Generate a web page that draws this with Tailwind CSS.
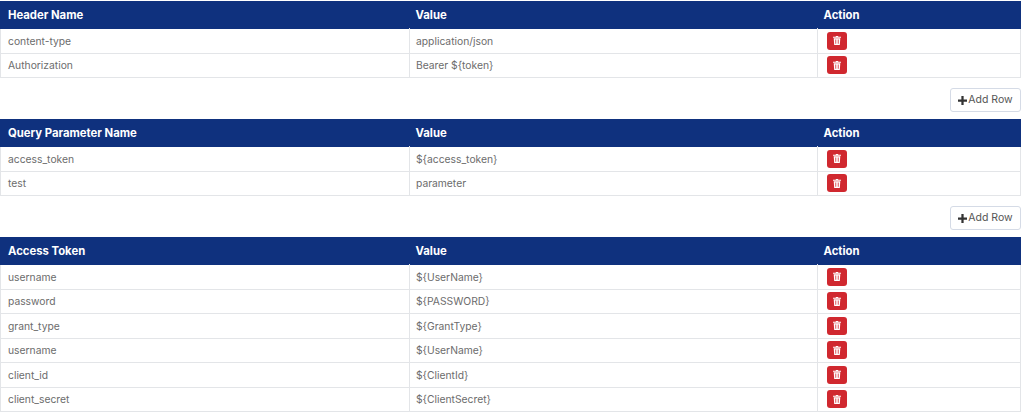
<!DOCTYPE html>
<html><head>
<meta charset="utf-8">
<title>Request settings</title>
<script src="https://cdn.jsdelivr.net/npm/@tailwindcss/browser@4"></script>
</head>
<body class="bg-white overflow-hidden h-[412px] font-['Inter',sans-serif] text-[10.3px] text-[#6c6c6c]">
  <div class="w-[1021px] pt-px">

    <!-- headers -->
    <table class="w-full table-fixed border-collapse">
      <thead>
        <tr class="h-[27px] bg-[#0f317e] border border-[#0f317e] text-white text-[11.3px] font-bold text-left">
          <th class="w-[409px] pl-[7px] pt-px font-bold">Header Name</th>
          <th class="w-[408px] pl-[6px] pt-px font-bold">Value</th>
          <th class="pl-[6px] pt-px font-bold">Action</th>
        </tr>
      </thead>
      <tbody>
        <tr class="h-[24.5px] border border-[#e3e5e8]">
          <td class="pl-[7px] pt-px">content-type</td>
          <td class="pl-[6px] pt-px border-l border-[#e3e5e8]">application/json</td>
          <td class="pl-[9px] border-l border-[#e3e5e8]">
            <button class="flex items-center justify-center w-[20px] h-[18px] rounded-[3px] bg-[#d0282f]"><svg width="8" height="9" viewBox="0 0 8 9"><path fill="#fff" d="M3 0h2l.4.8H8v1H0v-1h2.6zM.7 2.3h6.6L6.8 9H1.2zM2.4 3.4v4.4h.8V3.4zm2.4 0v4.4h.8V3.4z"/></svg></button>
          </td>
        </tr>
        <tr class="h-[24.5px] border border-[#e3e5e8]">
          <td class="pl-[7px] pt-px">Authorization</td>
          <td class="pl-[6px] pt-px border-l border-[#e3e5e8]">Bearer ${token}</td>
          <td class="pl-[9px] border-l border-[#e3e5e8]">
            <button class="flex items-center justify-center w-[20px] h-[18px] rounded-[3px] bg-[#d0282f]"><svg width="8" height="9" viewBox="0 0 8 9"><path fill="#fff" d="M3 0h2l.4.8H8v1H0v-1h2.6zM.7 2.3h6.6L6.8 9H1.2zM2.4 3.4v4.4h.8V3.4zm2.4 0v4.4h.8V3.4z"/></svg></button>
          </td>
        </tr>
      </tbody>
    </table>
    <div class="flex justify-end pt-[10px] pb-[7px]">
      <button class="flex items-center justify-center gap-px w-[71px] h-[24px] rounded-[3px] border border-[#d5dbe6] text-[10.5px] text-[#555]"><svg width="9" height="9" viewBox="0 0 8 8"><path fill="#333" d="M3 0h2v3h3v2H5v3H3V5H0V3h3z"/></svg>Add Row</button>
    </div>

    <!-- query parameters -->
    <table class="w-full table-fixed border-collapse">
      <thead>
        <tr class="h-[27px] bg-[#0f317e] border border-[#0f317e] text-white text-[11.3px] font-bold text-left">
          <th class="w-[409px] pl-[7px] pt-px font-bold">Query Parameter Name</th>
          <th class="w-[408px] pl-[6px] pt-px font-bold">Value</th>
          <th class="pl-[6px] pt-px font-bold">Action</th>
        </tr>
      </thead>
      <tbody>
        <tr class="h-[24.5px] border border-[#e3e5e8]">
          <td class="pl-[7px] pt-px">access_token</td>
          <td class="pl-[6px] pt-px border-l border-[#e3e5e8]">${access_token}</td>
          <td class="pl-[9px] border-l border-[#e3e5e8]">
            <button class="flex items-center justify-center w-[20px] h-[18px] rounded-[3px] bg-[#d0282f]"><svg width="8" height="9" viewBox="0 0 8 9"><path fill="#fff" d="M3 0h2l.4.8H8v1H0v-1h2.6zM.7 2.3h6.6L6.8 9H1.2zM2.4 3.4v4.4h.8V3.4zm2.4 0v4.4h.8V3.4z"/></svg></button>
          </td>
        </tr>
        <tr class="h-[24.5px] border border-[#e3e5e8]">
          <td class="pl-[7px] pt-px">test</td>
          <td class="pl-[6px] pt-px border-l border-[#e3e5e8]">parameter</td>
          <td class="pl-[9px] border-l border-[#e3e5e8]">
            <button class="flex items-center justify-center w-[20px] h-[18px] rounded-[3px] bg-[#d0282f]"><svg width="8" height="9" viewBox="0 0 8 9"><path fill="#fff" d="M3 0h2l.4.8H8v1H0v-1h2.6zM.7 2.3h6.6L6.8 9H1.2zM2.4 3.4v4.4h.8V3.4zm2.4 0v4.4h.8V3.4z"/></svg></button>
          </td>
        </tr>
      </tbody>
    </table>
    <div class="flex justify-end pt-[10px] pb-[7px]">
      <button class="flex items-center justify-center gap-px w-[71px] h-[24px] rounded-[3px] border border-[#d5dbe6] text-[10.5px] text-[#555]"><svg width="9" height="9" viewBox="0 0 8 8"><path fill="#333" d="M3 0h2v3h3v2H5v3H3V5H0V3h3z"/></svg>Add Row</button>
    </div>

    <!-- access token -->
    <table class="w-full table-fixed border-collapse">
      <thead>
        <tr class="h-[27px] bg-[#0f317e] border border-[#0f317e] text-white text-[11.3px] font-bold text-left">
          <th class="w-[409px] pl-[7px] pt-px font-bold">Access Token</th>
          <th class="w-[408px] pl-[6px] pt-px font-bold">Value</th>
          <th class="pl-[6px] pt-px font-bold">Action</th>
        </tr>
      </thead>
      <tbody>
        <tr class="h-[24.5px] border border-[#e3e5e8]">
          <td class="pl-[7px] pt-px">username</td>
          <td class="pl-[6px] pt-px border-l border-[#e3e5e8]">${UserName}</td>
          <td class="pl-[9px] border-l border-[#e3e5e8]">
            <button class="flex items-center justify-center w-[20px] h-[18px] rounded-[3px] bg-[#d0282f]"><svg width="8" height="9" viewBox="0 0 8 9"><path fill="#fff" d="M3 0h2l.4.8H8v1H0v-1h2.6zM.7 2.3h6.6L6.8 9H1.2zM2.4 3.4v4.4h.8V3.4zm2.4 0v4.4h.8V3.4z"/></svg></button>
          </td>
        </tr>
        <tr class="h-[24.5px] border border-[#e3e5e8]">
          <td class="pl-[7px] pt-px">password</td>
          <td class="pl-[6px] pt-px border-l border-[#e3e5e8]">${PASSWORD}</td>
          <td class="pl-[9px] border-l border-[#e3e5e8]">
            <button class="flex items-center justify-center w-[20px] h-[18px] rounded-[3px] bg-[#d0282f]"><svg width="8" height="9" viewBox="0 0 8 9"><path fill="#fff" d="M3 0h2l.4.8H8v1H0v-1h2.6zM.7 2.3h6.6L6.8 9H1.2zM2.4 3.4v4.4h.8V3.4zm2.4 0v4.4h.8V3.4z"/></svg></button>
          </td>
        </tr>
        <tr class="h-[24.5px] border border-[#e3e5e8]">
          <td class="pl-[7px] pt-px">grant_type</td>
          <td class="pl-[6px] pt-px border-l border-[#e3e5e8]">${GrantType}</td>
          <td class="pl-[9px] border-l border-[#e3e5e8]">
            <button class="flex items-center justify-center w-[20px] h-[18px] rounded-[3px] bg-[#d0282f]"><svg width="8" height="9" viewBox="0 0 8 9"><path fill="#fff" d="M3 0h2l.4.8H8v1H0v-1h2.6zM.7 2.3h6.6L6.8 9H1.2zM2.4 3.4v4.4h.8V3.4zm2.4 0v4.4h.8V3.4z"/></svg></button>
          </td>
        </tr>
        <tr class="h-[24.5px] border border-[#e3e5e8]">
          <td class="pl-[7px] pt-px">username</td>
          <td class="pl-[6px] pt-px border-l border-[#e3e5e8]">${UserName}</td>
          <td class="pl-[9px] border-l border-[#e3e5e8]">
            <button class="flex items-center justify-center w-[20px] h-[18px] rounded-[3px] bg-[#d0282f]"><svg width="8" height="9" viewBox="0 0 8 9"><path fill="#fff" d="M3 0h2l.4.8H8v1H0v-1h2.6zM.7 2.3h6.6L6.8 9H1.2zM2.4 3.4v4.4h.8V3.4zm2.4 0v4.4h.8V3.4z"/></svg></button>
          </td>
        </tr>
        <tr class="h-[24.5px] border border-[#e3e5e8]">
          <td class="pl-[7px] pt-px">client_id</td>
          <td class="pl-[6px] pt-px border-l border-[#e3e5e8]">${ClientId}</td>
          <td class="pl-[9px] border-l border-[#e3e5e8]">
            <button class="flex items-center justify-center w-[20px] h-[18px] rounded-[3px] bg-[#d0282f]"><svg width="8" height="9" viewBox="0 0 8 9"><path fill="#fff" d="M3 0h2l.4.8H8v1H0v-1h2.6zM.7 2.3h6.6L6.8 9H1.2zM2.4 3.4v4.4h.8V3.4zm2.4 0v4.4h.8V3.4z"/></svg></button>
          </td>
        </tr>
        <tr class="h-[24.5px] border border-[#e3e5e8]">
          <td class="pl-[7px] pt-px">client_secret</td>
          <td class="pl-[6px] pt-px border-l border-[#e3e5e8]">${ClientSecret}</td>
          <td class="pl-[9px] border-l border-[#e3e5e8]">
            <button class="flex items-center justify-center w-[20px] h-[18px] rounded-[3px] bg-[#d0282f]"><svg width="8" height="9" viewBox="0 0 8 9"><path fill="#fff" d="M3 0h2l.4.8H8v1H0v-1h2.6zM.7 2.3h6.6L6.8 9H1.2zM2.4 3.4v4.4h.8V3.4zm2.4 0v4.4h.8V3.4z"/></svg></button>
          </td>
        </tr>
      </tbody>
    </table>

  </div>
</body></html>
